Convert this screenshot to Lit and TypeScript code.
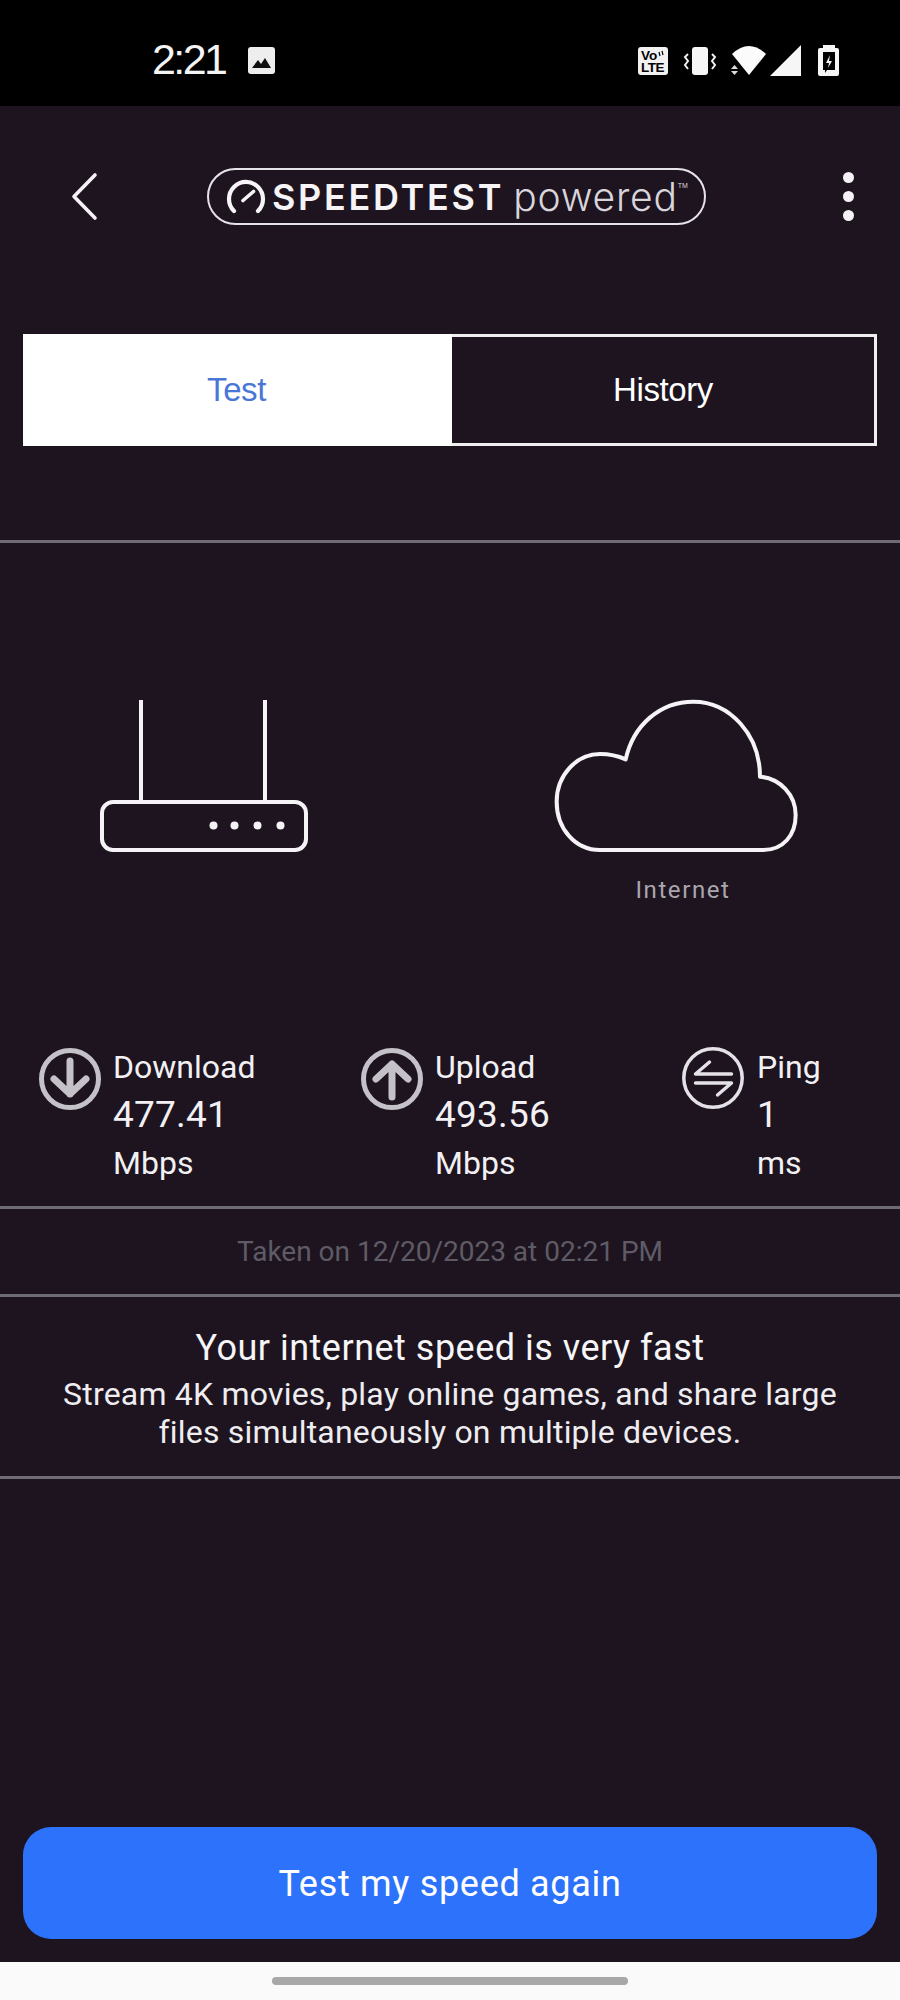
import { LitElement, css, html, svg } from 'lit'
import { customElement } from 'lit/decorators.js'

const stats = [
  {
    cls: 'down', label: 'Download', value: '477.41', unit: 'Mbps',
    icon: svg`<circle cx="31" cy="31" r="28.5" fill="none" stroke="#c4c1c8" stroke-width="5"/>
      <path d="M31 13V46M15 31L31 46L47 31" fill="none" stroke="#c4c1c8" stroke-width="7" stroke-linecap="round" stroke-linejoin="round"/>`,
  },
  {
    cls: 'up', label: 'Upload', value: '493.56', unit: 'Mbps',
    icon: svg`<circle cx="31" cy="31" r="28.5" fill="none" stroke="#c4c1c8" stroke-width="5"/>
      <path d="M31 49V16M15 31L31 16L47 31" fill="none" stroke="#c4c1c8" stroke-width="7" stroke-linecap="round" stroke-linejoin="round"/>`,
  },
  {
    cls: 'ping', label: 'Ping', value: '1', unit: 'ms',
    icon: svg`<circle cx="31" cy="31" r="29.2" fill="none" stroke="#e4e2e6" stroke-width="3.5"/>
      <path d="M49.5 27H13.5L27.5 15M13.5 36H49.5L35.5 48" fill="none" stroke="#e4e2e6" stroke-width="3.4" stroke-linecap="round" stroke-linejoin="round"/>`,
  },
]

@customElement('app-root')
export class AppRoot extends LitElement {
  static styles = css`
    :host {
      display: block;
      width: 900px;
      height: 2000px;
      background: #1d1420;
      color: #fff;
      font-family: Roboto, "Liberation Sans", sans-serif;
    }
    svg { display: block; }
    .page { display: flex; flex-direction: column; height: 2000px; }

    .status {
      height: 106px;
      background: #000;
      display: flex;
      align-items: center;
      padding: 15px 0 0 152px;
      box-sizing: border-box;
    }
    .clock {
      font-family: "Liberation Sans", sans-serif;
      font-size: 43px;
      letter-spacing: -2.6px;
      line-height: 50px;
      margin-top: -3px;
      width: 96px;
      color: #f4f4f4;
    }
    .status-right { margin-left: auto; margin-right: 50px; }
    .status-pic { margin-top: -1px; }

    .head {
      margin-top: 62px;
      height: 57px;
      display: flex;
      align-items: center;
    }
    .back { margin-left: 70px; }
    .logo {
      margin-left: 108px;
      width: 499px;
      height: 57px;
      box-sizing: border-box;
      border: 2px solid #e6e3e8;
      border-radius: 29px;
      display: flex;
      align-items: center;
      padding-left: 17px;
    }
    .logo .name {
      font-family: Inter, sans-serif;
      font-weight: 600;
      font-size: 36px;
      letter-spacing: 2.7px;
      margin-left: 6px;
      line-height: 40px;
      color: #f6f4f6;
    }
    .logo .pw {
      font-family: Inter, sans-serif;
      font-weight: 300;
      font-size: 39px;
      letter-spacing: 0.8px;
      margin-left: 9px;
      line-height: 40px;
      color: #d9d6db;
    }
    .logo sup {
      font-family: "Liberation Sans", sans-serif;
      font-size: 7px;
      line-height: 7px;
      align-self: flex-start;
      margin-top: 12px;
      color: #d9d6db;
    }
    .menu { margin-left: 137px; display: flex; flex-direction: column; gap: 8px; }
    .menu i { width: 11px; height: 11px; border-radius: 50%; background: #f4f2f5; display: block; }

    .tabs {
      margin: 109px 23px 0;
      height: 112px;
      display: grid;
      grid-template-columns: 429px 425px;
      font-family: "Liberation Sans", sans-serif;
      font-size: 33px;
      letter-spacing: -0.4px;
    }
    .tab { display: flex; align-items: center; justify-content: center; box-sizing: border-box; }
    .tab.on { background: #fff; color: #4a76d6; padding-right: 2px; }
    .tab.off { border: 3px solid #f0eef1; border-left: 0; color: #fff; }

    .rule { height: 3px; background: #6f6b76; flex: none; }
    .r1 { margin-top: 94px; }

    .devices { margin-top: 117px; display: grid; grid-template-columns: 450px 450px; height: 200px; }
    .inet {
      margin-top: 15px;
      height: 30px;
      padding-left: 16px;
      text-align: center;
      font-size: 24px;
      line-height: 30px;
      letter-spacing: 1.6px;
      color: #a9a6ad;
    }

    .stats { margin-top: 183px; height: 163px; display: grid; grid-template-columns: 322px 321px 1fr; padding-left: 39px; }
    .stat { display: flex; align-items: flex-start; gap: 12px; }
    .stat svg { margin-top: 5px; flex: none; }
    .stat.ping { gap: 13px; }
    .stat.ping svg { margin-top: 4px; }
    .txt { font-size: 32px; line-height: 48px; color: #f2f0f3; }
    .txt b { display: block; font-weight: 400; font-size: 37px; letter-spacing: 0.2px; }

    .taken {
      height: 85px;
      display: flex;
      align-items: center;
      justify-content: center;
      font-size: 28px;
      color: #5f5b66;
    }
    .summary { height: 179px; box-sizing: border-box; padding-top: 25px; text-align: center; }
    .summary h2 { margin: 0; font-weight: 400; font-size: 36px; line-height: 53px; letter-spacing: 0.5px; color: #f6f5f7; }
    .summary p { margin: 0; font-size: 32px; line-height: 38px; letter-spacing: 0.2px; color: #efedf0; }

    .grow { flex: 1; }
    .cta {
      margin: 0 23px 23px;
      height: 112px;
      border-radius: 28px;
      background: #2d72fa;
      display: flex;
      align-items: center;
      justify-content: center;
      padding-top: 2px;
      box-sizing: border-box;
      font-size: 36px;
      letter-spacing: 0.7px;
      color: #fff;
    }
    .nav { height: 38px; background: #fafafa; display: flex; justify-content: center; align-items: flex-start; }
    .nav i { display: block; margin-top: 15px; width: 356px; height: 8px; border-radius: 4px; background: #a8a8a8; }
  `

  render() {
    return html`
      <div class="page">
        <div class="status">
          <span class="clock">2:21</span>
          <svg class="status-pic" width="27" height="27" viewBox="0 0 27 27">
            <rect width="27" height="27" rx="3" fill="#eee"/>
            <path d="M4 21L10 13L13 17L17 11L23 21Z" fill="#111"/>
          </svg>
          <svg class="status-right" width="220" height="40" viewBox="630 40 220 40">
            <rect x="638" y="46" width="30" height="28" rx="3" fill="#f2f2f2"/>
            <text x="641" y="59" font-family="Liberation Sans" font-weight="700" font-size="13.5" fill="#000">Vo</text>
            <path d="M659 51l1 4M662 50l1 4" stroke="#000" stroke-width="1.2"/>
            <text x="641" y="71" font-family="Liberation Sans" font-weight="700" font-size="13.5" letter-spacing="-0.5" fill="#000">LTE</text>
            <rect x="692" y="46" width="16" height="28" rx="3" fill="#f6f6f6"/>
            <path d="M688 53l-3 3l3 4l-3 4l3 4M712 53l3 3l-3 4l3 4l-3 4" fill="none" stroke="#f2f2f2" stroke-width="2"/>
            <path d="M732 53Q749 37 766 53L749 74Z" fill="#fbfbfb"/>
            <path d="M734.5 64L731 68H738ZM731 70H738L734.5 74Z" fill="#ddd"/>
            <path d="M770 75L801 44V75Z" fill="#f6f6f6"/>
            <path d="M823 47V44H835V47H837A2 2 0 0 1 839 49V73A2 2 0 0 1 837 75H820A2 2 0 0 1 818 73V49A2 2 0 0 1 820 47Z" fill="#f6f6f6"/>
            <path d="M823 51H835V69H827L825 72V69H823Z" fill="#000"/>
            <path d="M830 54L826 62H829L828 67L832 60H829Z" fill="#f6f6f6"/>
          </svg>
        </div>

        <div class="head">
          <svg class="back" width="29" height="49" viewBox="0 0 29 49">
            <path d="M25 3L4 24.5L25 46" fill="none" stroke="#f4f2f5" stroke-width="3.6" stroke-linecap="round" stroke-linejoin="round"/>
          </svg>
          <div class="logo">
            <svg width="40" height="36" viewBox="0 0 40 36">
              <path d="M8 32A17 17 0 1 1 32 32" fill="none" stroke="#f6f4f6" stroke-width="4.2" stroke-linecap="round"/>
              <path d="M17 21.5L27.5 12.5" fill="none" stroke="#f6f4f6" stroke-width="3.6" stroke-linecap="round"/>
            </svg>
            <span class="name">SPEEDTEST</span>
            <span class="pw">powered</span>
            <sup>TM</sup>
          </div>
          <div class="menu"><i></i><i></i><i></i></div>
        </div>

        <div class="tabs">
          <div class="tab on">Test</div>
          <div class="tab off">History</div>
        </div>

        <div class="rule r1"></div>

        <div class="devices">
          <svg width="450" height="200" viewBox="0 0 450 200">
            <path d="M141 40V141M265 40V141" stroke="#f5f3f6" stroke-width="4" fill="none"/>
            <rect x="102" y="142" width="204" height="48" rx="11" fill="none" stroke="#f5f3f6" stroke-width="4"/>
            <circle cx="213.5" cy="165.5" r="4" fill="#f5f3f6"/>
            <circle cx="234.5" cy="165.5" r="4" fill="#f5f3f6"/>
            <circle cx="257.5" cy="165.5" r="4" fill="#f5f3f6"/>
            <circle cx="280.5" cy="165.5" r="4" fill="#f5f3f6"/>
          </svg>
          <div>
            <svg width="450" height="200" viewBox="0 0 1350 600">
              <path d="M450 570C375 570 320 505 320 425C320 345 380 282 450 282C478 282 505 288 527 298C550 195 630 125 730 125C840 125 930 225 930 350C990 355 1037 405 1037 465C1037 525 1000 570 940 570Z" fill="none" stroke="#f5f3f6" stroke-width="12" stroke-linejoin="round"/>
            </svg>
            <div class="inet">Internet</div>
          </div>
        </div>

        <div class="stats">
          ${stats.map(s => html`
            <div class="stat ${s.cls}">
              <svg width="62" height="62" viewBox="0 0 62 62">${s.icon}</svg>
              <div class="txt">${s.label}<b>${s.value}</b>${s.unit}</div>
            </div>
          `)}
        </div>

        <div class="rule"></div>
        <div class="taken">Taken on 12/20/2023 at 02:21 PM</div>
        <div class="rule"></div>
        <div class="summary">
          <h2>Your internet speed is very fast</h2>
          <p>Stream 4K movies, play online games, and share large<br>files simultaneously on multiple devices.</p>
        </div>
        <div class="rule"></div>

        <div class="grow"></div>
        <div class="cta">Test my speed again</div>
        <div class="nav"><i></i></div>
      </div>
    `
  }
}
